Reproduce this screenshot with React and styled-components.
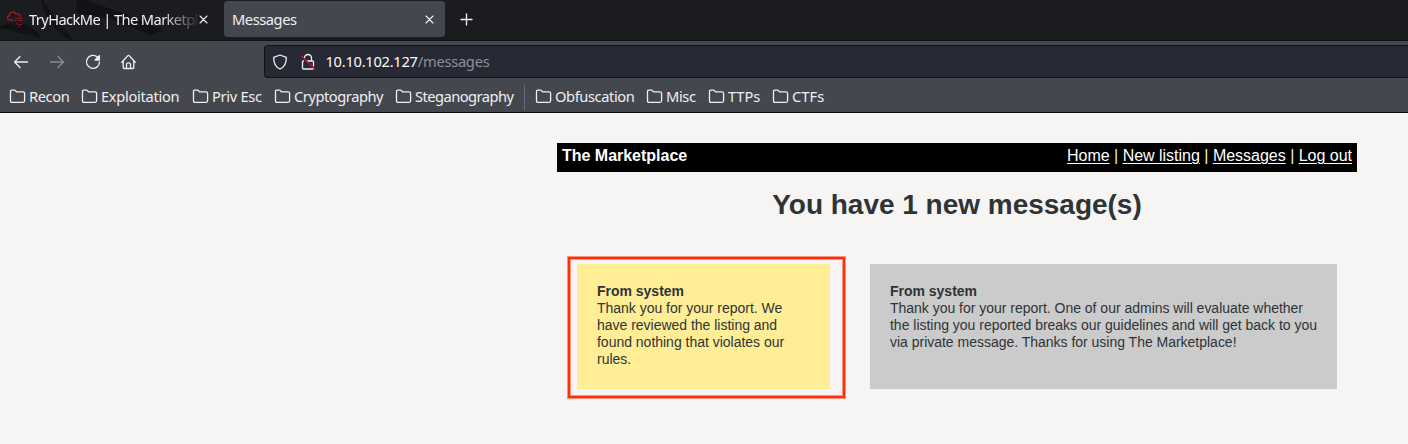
import React from 'react';
import styled, { createGlobalStyle } from 'styled-components';

const Global = createGlobalStyle`
  * { box-sizing: border-box; }
  body { margin: 0; background: #f6f5f3; overflow: hidden; }
`;
const Screen = styled.div`
  width: 1408px;
  height: 444px;
  font-family: 'Liberation Sans', Arial, sans-serif;
  color: #2e3436;
  background: #f6f5f3;
  letter-spacing: -0.015px;
`;
const Chrome = styled.header`
  height: 113px;
  border-bottom: 1px solid #0c0c0d;
  background: #45474f;
  color: #f0f0f0;
  font: 14.67px/20px 'Noto Sans', sans-serif;
  letter-spacing: -0.45px;
`;
const TabStrip = styled.div`
  position: relative;
  display: flex;
  height: 41px;
  padding-top: 1px;
  background: #1b1c20;
  border-bottom: 1px solid #111215;
`;
const Backdrop = styled.svg`
  position: absolute;
  left: 0;
  top: 0;
`;
const Tab = styled.div`
  position: relative;
  display: flex;
  align-items: center;
  width: ${(p) => p.$width}px;
  height: 36px;
  padding: 0 11px 0 ${(p) => p.$inset}px;
  margin-right: ${(p) => p.$after}px;
  border-radius: 4px;
  background: ${(p) => (p.$active ? '#45474f' : 'transparent')};
`;
const TabLabel = styled.span`
  flex: 1;
  white-space: nowrap;
  margin-left: ${(p) => (p.$icon ? 5 : 0)}px;
  ${(p) => p.$fade && 'letter-spacing: -0.6px; mask-image: linear-gradient(to right, #000 78%, transparent 101%);'}
`;
const Icon = styled.svg`
  flex: none;
  display: block;
  fill: none;
  stroke: currentColor;
  stroke-width: ${(p) => p.$weight || 1.3};
  stroke-linecap: round;
  stroke-linejoin: round;
`;
const LockIcon = styled(Icon)`
  margin-left: 11px;
`;
const NavBar = styled.div`
  display: flex;
  align-items: center;
  height: 41px;
  padding-left: 13px;
`;
const NavButtons = styled.div`
  display: flex;
  gap: 20px;
  width: 251px;
`;
const NavButton = styled.span`
  opacity: ${(p) => (p.$disabled ? 0.4 : 1)};
`;
const UrlBar = styled.div`
  display: flex;
  align-items: center;
  flex: 1;
  height: 33px;
  padding-left: 7px;
  border: 1px solid #0f1118;
  border-right: 0;
  border-radius: 4px 0 0 4px;
  background: #272935;
`;
const Url = styled.span`
  margin-left: 8.5px;
  padding-bottom: 2px;
  color: #fbfbfe;
  letter-spacing: -0.26px;
`;
const Path = styled.span`
  color: #8f9097;
`;
const Bookmarks = styled.div`
  display: flex;
  height: 30px;
  align-items: center;
  padding-left: 9px;
`;
const Bookmark = styled.span`
  display: flex;
  align-items: center;
  gap: 3px;
  width: ${(p) => p.$width}px;
  padding-bottom: 2px;
  white-space: nowrap;
  letter-spacing: ${(p) => p.$spacing}px;
`;
const Separator = styled.span`
  width: 1px;
  height: 25px;
  margin-right: 10px;
  background: #6b6c73;
`;
const Page = styled.main`
  width: 800px;
  margin-left: 557px;
  padding-top: 30px;
`;
const SiteBar = styled.nav`
  display: flex;
  justify-content: space-between;
  height: 29px;
  padding: 3px 5px;
  background: #000;
  color: #fff;
  font-size: 16px;
  line-height: 19px;
`;
const Link = styled.a`
  color: #fff;
  text-decoration: underline;
  text-decoration-thickness: 1px;
  text-underline-offset: 2px;
`;
const Bar = styled.span`
  color: #f3eec0;
`;
const Title = styled.h1`
  margin: 16px 0 43px;
  font-size: 28px;
  line-height: 33px;
  text-align: center;
`;
const Cards = styled.div`
  display: flex;
  gap: 40px;
  padding-left: 20px;
`;
const Card = styled.article`
  position: relative;
  width: ${(p) => p.$width}px;
  height: 125px;
  padding: 19px 18px 0 20px;
  background: ${(p) => (p.$unread ? '#ffee96' : '#cbcbcb')};
  font-size: 14px;
  line-height: 17px;
`;
const Highlight = styled.div`
  position: absolute;
  left: -9px;
  top: -7px;
  width: 277px;
  height: 141px;
  border: 2px solid #ff3008;
  box-shadow: 0 0 0 1px #ff300880, inset 0 0 0 1px #ff300880;
`;
const Line = styled.div`
  white-space: nowrap;
`;

const Folder = () => (
  <Icon width="17" height="16" viewBox="0 0 17 16">
    <path d="M1.5 13V3.5Q1.5 2.2 2.8 2.2H5.5Q6.1 2.2 6.5 2.7L7.5 3.9H14Q15.6 3.9 15.6 5.4V12.8Q15.6 14.3 14 14.3H2.8Q1.5 14.3 1.5 13Z" />
  </Icon>
);
const Close = () => (
  <Icon width="9" height="9" viewBox="0 0 9 9" $weight={1.1}>
    <path d="M1 1L8 8M8 1L1 8" />
  </Icon>
);
const Cloud = () => (
  <Icon width="18" height="18" viewBox="0 0 18 18" color="#c5161d" $weight={1.1}>
    <path d="M7 10H4C.8 10 .6 6.2 3.5 5.8C3 1.5 8.5 .6 10 4C12.5 3 14.6 4.6 14.2 6.8" />
    <path d="M9.5 8.5H11.5M13 8.5H16M9 10.5H10M12 10.5H13.5M15 10.5H16M10 14H11.5M13 14.5H15.5M12 16.3H13" opacity=".75" />
  </Icon>
);
const first = [['Recon', 72, -0.4], ['Exploitation', 111, -0.3], ['Priv Esc', 82, -0.3], ['Cryptography', 121, -0.45], ['Steganography', 129, -0.52]];
const second = [['Obfuscation', 111, -0.4], ['Misc', 62, -0.4], ['TTPs', 64, -0.1], ['CTFs', 60, 0.1]];

export default function App() {
  return (
    <Screen>
      <Global />
      <Chrome>
        <TabStrip>
          <Backdrop width="190" height="40" viewBox="0 0 190 40">
            <path d="M0 28Q24 17 40 38M42 0Q50 28 73 40M78 0Q120 12 158 30L150 34Q110 14 78 12Z" fill="#121317" stroke="#111216" strokeWidth="3" />
          </Backdrop>
          <Tab $width={219} $inset={6} $after={5}>
            <Cloud />
            <TabLabel $icon $fade>TryHackMe | The Marketpl</TabLabel>
            <Close />
          </Tab>
          <Tab $active $width={221} $inset={8} $after={15}>
            <TabLabel>Messages</TabLabel>
            <Close />
          </Tab>
          <Tab $width={40} $inset={0} $after={0}>
            <Icon width="13" height="13" viewBox="0 0 13 13"><path d="M6.5 1V12M1 6.5H12" /></Icon>
          </Tab>
        </TabStrip>
        <NavBar>
          <NavButtons>
            <NavButton><Icon width="16" height="16" viewBox="0 0 16 16"><path d="M14.5 8H1.5M7 2.5L1.5 8L7 13.5" /></Icon></NavButton>
            <NavButton $disabled><Icon width="16" height="16" viewBox="0 0 16 16"><path d="M1.5 8H14.5M9 2.5L14.5 8L9 13.5" /></Icon></NavButton>
            <NavButton><Icon width="16" height="16" viewBox="0 0 16 16"><path d="M12.6 3.3A6.5 6.5 0 1 0 14.5 8" /><path d="M14.3 1.8V6H10.1Z" fill="currentColor" /></Icon></NavButton>
            <NavButton><Icon width="16" height="16" viewBox="0 0 16 16"><path d="M.8 8.2L6.6 1.9Q7.5 1 8.4 1.9L14.2 8.2M2.2 7V13.2Q2.2 14.5 3.5 14.5H11.5Q12.8 14.5 12.8 13.2V7M5.5 14V10.3Q5.5 8.8 7.5 8.8T9.5 10.3V14" /></Icon></NavButton>
          </NavButtons>
          <UrlBar>
            <Icon width="16" height="16" viewBox="0 0 16 16"><path d="M8 1L14.3 3.4C14.5 8 13 12.8 8 15C3 12.8 1.5 8 1.7 3.4Z" /></Icon>
            <LockIcon width="18" height="18" viewBox="0 0 18 18">
              <path d="M5.5 5A3.5 3.5 0 0 1 12.5 5V8M8 8H13.5Q14.5 8 14.5 9V13M14 16H4.5Q3.5 16 3.5 15V9Q3.5 8.2 4.5 8" />
              <path d="M2.5 3L16 16" stroke="#e0093f" />
            </LockIcon>
            <Url>10.10.102.127<Path>/messages</Path></Url>
          </UrlBar>
        </NavBar>
        <Bookmarks>
          {first.map(([name, width, spacing]) => <Bookmark key={name} $width={width} $spacing={spacing}><Folder />{name}</Bookmark>)}
          <Separator />
          {second.map(([name, width, spacing]) => <Bookmark key={name} $width={width} $spacing={spacing}><Folder />{name}</Bookmark>)}
        </Bookmarks>
      </Chrome>
      <Page>
        <SiteBar>
          <b>The Marketplace</b>
          <span><Link>Home</Link> <Bar>|</Bar> <Link>New listing</Link> <Bar>|</Bar> <Link>Messages</Link> <Bar>|</Bar> <Link>Log out</Link></span>
        </SiteBar>
        <Title>You have 1 new message(s)</Title>
        <Cards>
          <Card $unread $width={253}>
            <b>From system</b>
            <Line>Thank you for your report. We</Line>
            <Line>have reviewed the listing and</Line>
            <Line>found nothing that violates our</Line>
            <Line>rules.</Line>
            <Highlight />
          </Card>
          <Card $width={467}>
            <b>From system</b>
            <Line>Thank you for your report. One of our admins will evaluate whether</Line>
            <Line>the listing you reported breaks our guidelines and will get back to you</Line>
            <Line>via private message. Thanks for using The Marketplace!</Line>
          </Card>
        </Cards>
      </Page>
    </Screen>
  );
}
